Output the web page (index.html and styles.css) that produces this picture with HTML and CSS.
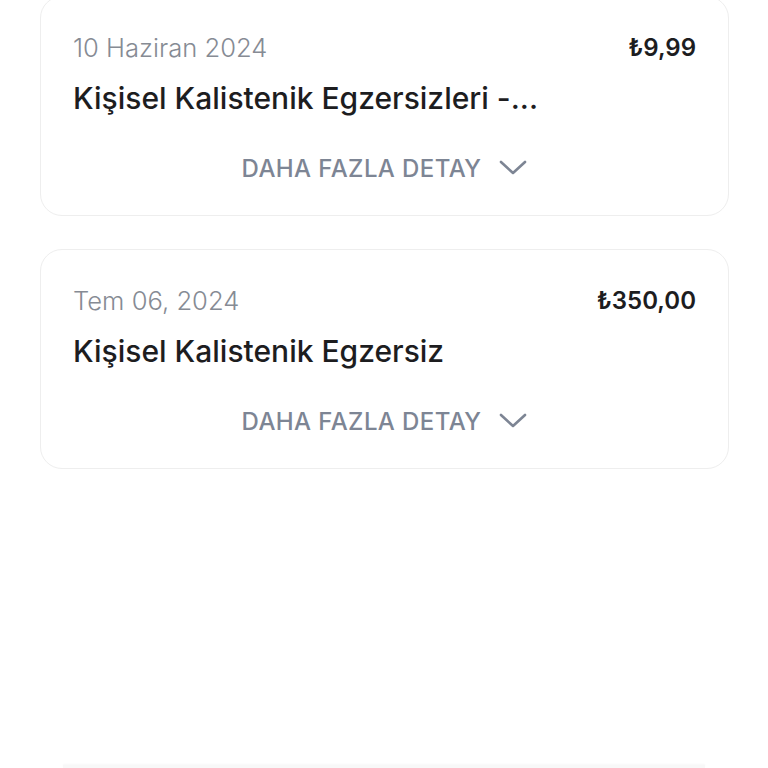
FILE: index.html
```html
<!DOCTYPE html>
<html>
<head>
  <meta charset="UTF-8">
  <title>Siparişler</title>
  <link rel="stylesheet" href="styles.css">
</head>
<body>
<div class="order-list">
  <div class="order-card first">
    <div class="order-top">
      <div class="order-date">10 Haziran 2024</div>
      <div class="order-price">₺9,99</div>
    </div>
    <div class="order-title">Kişisel Kalistenik Egzersizleri -...</div>
    <div class="order-more">
      <span>DAHA FAZLA DETAY</span>
      <svg class="chevron" width="28" height="16" viewBox="0 0 28 16">
        <path d="M2 2 L14 13 L26 2" fill="none" stroke="#7d8594" stroke-width="2.6" stroke-linecap="round" stroke-linejoin="round"/>
      </svg>
    </div>
  </div>

  <div class="order-card">
    <div class="order-top">
      <div class="order-date">Tem 06, 2024</div>
      <div class="order-price">₺350,00</div>
    </div>
    <div class="order-title">Kişisel Kalistenik Egzersiz</div>
    <div class="order-more">
      <span>DAHA FAZLA DETAY</span>
      <svg class="chevron" width="28" height="16" viewBox="0 0 28 16">
        <path d="M2 2 L14 13 L26 2" fill="none" stroke="#7d8594" stroke-width="2.6" stroke-linecap="round" stroke-linejoin="round"/>
      </svg>
    </div>
  </div>
</div>

<div class="bottom-bar"></div>
</body>
</html>
```

FILE: styles.css
```css
body {
  margin: 0;
  background: #ffffff;
  font-family: "Inter", "Noto Sans", sans-serif;
  height: 768px;
  overflow: hidden;
  display: flex;
  flex-direction: column;
}

.order-list {
  padding: 0 39px 0 40px;
  display: flex;
  flex-direction: column;
  gap: 33px;
  flex: 1;
}

.order-card {
  border: 1px solid #eeeeee;
  border-radius: 22px;
  height: 220px;
  box-sizing: border-box;
  padding: 35px 32px 0 32px;
}

.order-card.first {
  margin-top: -4px;
}

.order-top {
  display: flex;
  justify-content: space-between;
  align-items: center;
  height: 30px;
}

.order-date {
  font-size: 25.6px;
  font-weight: 300;
  color: #868b94;
}

.order-price {
  font-size: 24px;
  font-weight: 600;
  color: #1d1d1f;
}

.order-title {
  margin-top: 18px;
  font-size: 30px;
  line-height: 36px;
  font-weight: 500;
  color: #1d1d1f;
}

.order-more {
  margin-top: 37px;
  height: 30px;
  display: flex;
  justify-content: center;
  align-items: center;
  gap: 18px;
  font-size: 24px;
  font-weight: 500;
  letter-spacing: 0.4px;
  color: #7d8594;
}

.bottom-bar {
  margin: 0 63px;
  height: 3px;
  background: #f8f8f8;
  box-shadow: 0 -1px 2px rgba(0, 0, 0, 0.03);
}
```
